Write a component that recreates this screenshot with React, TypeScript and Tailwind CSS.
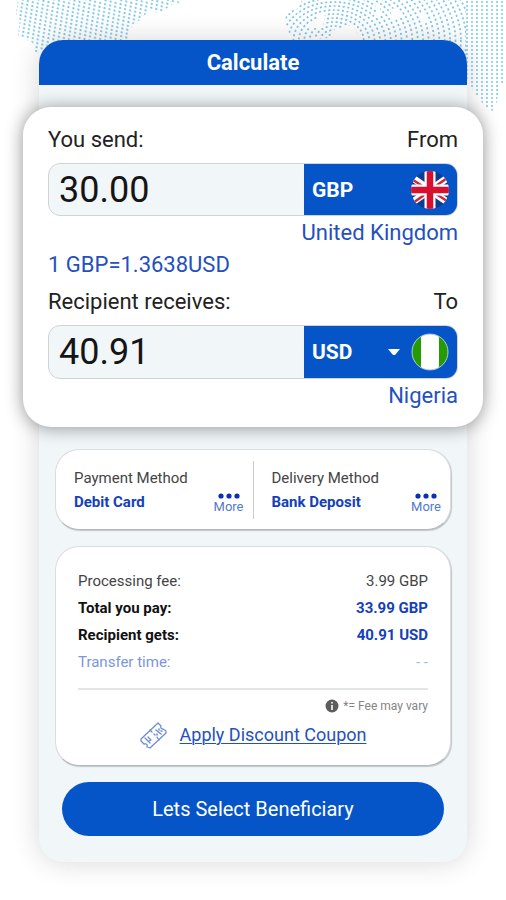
import { useState } from "react";

const RINGS = Array.from({ length: 44 }, (_, i) => 6 + i * 4);

const WorldMap = () => (
  <svg
    className="absolute inset-x-0 top-0 h-[120px] w-full"
    viewBox="0 0 506 120"
    preserveAspectRatio="xMidYMin slice"
    aria-hidden="true"
  >
    <defs>
      <pattern id="slant" width="5" height="4" patternUnits="userSpaceOnUse" patternTransform="skewY(14) skewX(-8)">
        <circle cx="2" cy="2" r="1.1" fill="#6cc0e4" />
      </pattern>
      <pattern id="grid" width="5" height="4" patternUnits="userSpaceOnUse">
        <circle cx="2" cy="2" r="1" fill="#7cc6ea" />
      </pattern>
      <clipPath id="europe">
        <path d="M302 0H466V78H420L372 40H362L352 25L335 29L330 38L292 40L285 24L286 12L297 9ZM318 14L316 22L308 23L310 28L323 28L325 14ZM374 4L378 10L373 18L380 18L380 4ZM390 8L398 10L402 18L392 18ZM422 8L428 16L424 27L420 20Z" clipRule="evenodd" />
      </clipPath>
    </defs>
    <path d="M18 0H182L180 6L176 1L168 8L158 13L150 10L140 20L133 24L128 38L130 50H42L36 54L32 42L18 36L20 20L16 14Z" fill="url(#slant)" />
    <g clipPath="url(#europe)" fill="none" stroke="#7cc6ea" strokeWidth="1.7" strokeDasharray="2 2.6">
      {RINGS.map((r) => (
        <ellipse key={r} cx="334" cy="40" rx={r * 1.35} ry={r} />
      ))}
    </g>
    <path d="M465 0H506V82L500 84L495 112L486 108L474 92L466 76Z" fill="url(#grid)" />
  </svg>
);

const UkFlag = () => (
  <svg className="size-10 shrink-0" viewBox="0 0 40 40" role="img" aria-label="United Kingdom flag">
    <defs>
      <clipPath id="uk">
        <circle cx="20" cy="20" r="19" />
      </clipPath>
    </defs>
    <g clipPath="url(#uk)">
      <path fill="#0c3c92" d="M0 0h40v40H0z" />
      <path stroke="#fff" strokeWidth="7" d="M0 6l40 28M40 6L0 34" />
      <path stroke="#d8203c" strokeWidth="2.4" d="M0 8l20 13M40 6L20 20M20 20l20 13M20 21L0 35" />
      <path stroke="#fff" strokeWidth="11" d="M20 0v40M0 20h40" />
      <path stroke="#d8102f" strokeWidth="6.5" d="M20 0v40M0 20h40" />
    </g>
  </svg>
);

const NigeriaFlag = () => (
  <svg className="size-10 shrink-0" viewBox="0 0 40 40" role="img" aria-label="Nigeria flag">
    <defs>
      <clipPath id="ng">
        <circle cx="20" cy="20" r="18" />
      </clipPath>
    </defs>
    <g clipPath="url(#ng)">
      <path fill="#fff" d="M0 0h40v40H0z" />
      <path fill="#259b00" d="M0 0h11v40H0zM29 0h11v40H29z" />
    </g>
    <circle cx="20" cy="20" r="18" fill="none" stroke="#9fc3d8" />
  </svg>
);

const CouponIcon = () => (
  <svg className="size-7" viewBox="0 0 28 28" fill="none" stroke="#6f8cd6" strokeWidth="1.3" strokeLinejoin="round" strokeLinecap="round" aria-hidden="true">
    <path d="M18 2l3 3q-1 3 2 3l3 2v2L10 27l-3-1q1-4-3-3l-3-3v-2Z" />
    <path d="M10 9l2 2M14 13l1 1M17 16l2 3" />
    <path d="M16 9l5 4M19 8v1M17 13v1M21 10h1" strokeWidth="1.6" />
    <path d="M5 17l5 5M8 16l3 3-2 1" />
  </svg>
);

type MethodProps = { title: string; value: string };

const Method = ({ title, value }: MethodProps) => (
  <div className="flex flex-1 flex-col pl-[18px] pr-[9px]">
    <span className="text-[15px] leading-6 text-[#444]">{title}</span>
    <div className="flex justify-between">
      <span className="text-[15px] font-bold leading-6 text-[#1440bb]">{value}</span>
      <button type="button" className="mt-px flex flex-col items-center text-[#1440bb]">
        <svg className="h-2 w-6" viewBox="0 0 24 8" fill="#0b2fb4" aria-hidden="true">
          <circle cx="4" cy="5" r="2.6" />
          <circle cx="12" cy="5" r="2.6" />
          <circle cx="20" cy="5" r="2.6" />
        </svg>
        <span className="text-[13px] leading-4 text-[#5578cc]">More</span>
      </button>
    </div>
  </div>
);

const fees = [
  { label: "Processing fee:", value: "3.99 GBP", labelClass: "text-[#444]", valueClass: "text-[#444]" },
  { label: "Total you pay:", value: "33.99 GBP", labelClass: "font-bold text-[#111]", valueClass: "font-bold text-[#1440bb]" },
  { label: "Recipient gets:", value: "40.91 USD", labelClass: "font-bold text-[#111]", valueClass: "font-bold text-[#1440bb]" },
  { label: "Transfer time:", value: "- -", labelClass: "text-[#7c96dc]", valueClass: "text-[#a9b8e8]" },
];

const App = () => {
  const [send, setSend] = useState("30.00");
  const [receive, setReceive] = useState("40.91");

  return (
    <main className="relative min-h-screen overflow-hidden bg-white px-[39px] pb-[38px] pt-10 font-['Roboto','Liberation_Sans',sans-serif]">
      <WorldMap />
      <div className="relative rounded-[24px] bg-[#f1f6f9] pb-[26px] shadow-[0_0_28px_rgba(0,0,0,0.16)]">
        <header className="rounded-t-[24px] bg-[#0555c8] py-2">
          <h1 className="text-center text-[22px] font-bold leading-[29px] text-white">Calculate</h1>
        </header>

        <section className="relative -mx-4 mt-[22px] rounded-[28px] bg-white px-[25px] pb-[18px] pt-5 text-[22px] leading-[26px] text-[#222] shadow-[0_1px_18px_rgba(0,0,0,0.4)]">
          <div className="flex justify-between">
            <label htmlFor="send">You send:</label>
            <span>From</span>
          </div>
          <div className="mt-[10px] flex h-[53px] overflow-hidden rounded-xl border border-[#cfd4d8] bg-[#f1f6f9]">
            <input
              id="send"
              value={send}
              onChange={(e) => setSend(e.target.value)}
              className="min-w-0 flex-1 bg-transparent px-[10px] text-[36px] text-[#151515] outline-none"
            />
            <div className="flex w-[153px] items-center justify-between bg-[#0555c8] pl-2 pr-[7px] text-white">
              <span className="text-[21px] font-bold">GBP</span>
              <UkFlag />
            </div>
          </div>
          <p className="mt-1 text-right text-[#2450c0]">United Kingdom</p>
          <p className="mt-[6px] text-[#2450c0]">1 GBP=1.3638USD</p>

          <div className="mt-[11px] flex justify-between">
            <label htmlFor="receive">Recipient receives:</label>
            <span>To</span>
          </div>
          <div className="mt-[10px] flex h-[54px] overflow-hidden rounded-xl border border-[#cfd4d8] bg-[#f1f6f9]">
            <input
              id="receive"
              value={receive}
              onChange={(e) => setReceive(e.target.value)}
              className="min-w-0 flex-1 bg-transparent px-[10px] text-[36px] text-[#151515] outline-none"
            />
            <button type="button" aria-label="Receive currency USD" className="flex w-[153px] items-center bg-[#0555c8] pl-2 pr-[7px] text-white">
              <span className="mr-auto text-[21px] font-bold">USD</span>
              <svg className="mr-[10px] h-2 w-3" viewBox="0 0 12 8" fill="#fff" aria-hidden="true">
                <path d="M0 1h12L7 7H5z" />
              </svg>
              <NigeriaFlag />
            </button>
          </div>
          <p className="mt-1 text-right text-[#2450c0]">Nigeria</p>
        </section>

        <section className="mx-4 mt-[22px] flex rounded-[24px] border border-[#d9dddf] border-b-[#b5b9bc] bg-white pb-[10px] pt-[11px] shadow-[1px_1px_1px_rgba(0,0,0,0.2)]">
          <div className="flex flex-1 border-r border-[#ccc] pb-1 pt-[5px]">
            <Method title="Payment Method" value="Debit Card" />
          </div>
          <div className="flex flex-1 pb-1 pt-[5px]">
            <Method title="Delivery Method" value="Bank Deposit" />
          </div>
        </section>

        <section className="mx-4 mt-4 rounded-[24px] border border-[#d9dddf] border-b-[#b5b9bc] bg-white px-[22px] pb-4 pt-[21px] text-[15px] leading-[27px] shadow-[1px_1px_1px_rgba(0,0,0,0.2)]">
          <dl>
            {fees.map((fee) => (
              <div key={fee.label} className="flex justify-between">
                <dt className={fee.labelClass}>{fee.label}</dt>
                <dd className={fee.valueClass}>{fee.value}</dd>
              </div>
            ))}
          </dl>
          <div className="mt-3 border-t-2 border-[#e3e4e6]" />
          <p className="mt-[6px] flex items-center justify-end gap-1 text-[12px] leading-5 text-[#858585]">
            <svg className="size-[14px]" viewBox="0 0 14 14" aria-hidden="true">
              <circle cx="7" cy="7" r="6.5" fill="#5d5d5d" />
              <path stroke="#ddd" strokeWidth="2" d="M7 3v1.6M7 6v5" />
            </svg>
            *= Fee may vary
          </p>
          <div className="mt-[5px] flex items-center justify-center gap-3">
            <CouponIcon />
            <a href="#coupon" className="text-[18px] leading-7 text-[#2450c0] underline decoration-1 underline-offset-2">
              Apply Discount Coupon
            </a>
          </div>
        </section>

        <div className="mx-[23px] mt-4">
          <button type="button" className="h-[54px] w-full rounded-full bg-[#0555c8] text-[20px] text-white">
            Lets Select Beneficiary
          </button>
        </div>
      </div>
    </main>
  );
};

export default App;
